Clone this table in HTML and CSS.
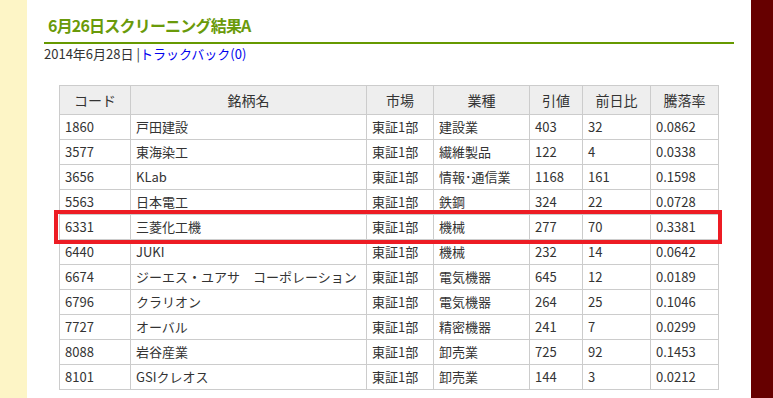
FILE: index.html
```html
<!DOCTYPE html>
<html lang="ja">
<head>
<meta charset="utf-8">
<title>6月26日スクリーニング結果A</title>
<link rel="stylesheet" href="styles.css">
</head>
<body>
<div class="page">
  <div class="side-left"></div>
  <main class="main">
    <h2 class="entry-title">6月26日スクリーニング結果A</h2>
    <div class="entry-meta">2014年6月28日 |<a href="#">トラックバック(0)</a></div>
    <div class="table-wrap">
      <table class="result">
        <colgroup>
          <col class="c-code"><col class="c-name"><col class="c-mkt"><col class="c-ind"><col class="c-price"><col class="c-diff"><col class="c-rate">
        </colgroup>
        <thead>
          <tr><th>コード</th><th>銘柄名</th><th>市場</th><th>業種</th><th>引値</th><th>前日比</th><th>騰落率</th></tr>
        </thead>
        <tbody>
          <tr><td>1860</td><td>戸田建設</td><td>東証1部</td><td>建設業</td><td>403</td><td>32</td><td>0.0862</td></tr>
          <tr><td>3577</td><td>東海染工</td><td>東証1部</td><td>繊維製品</td><td>122</td><td>4</td><td>0.0338</td></tr>
          <tr><td>3656</td><td>KLab</td><td>東証1部</td><td>情報･通信業</td><td>1168</td><td>161</td><td>0.1598</td></tr>
          <tr><td>5563</td><td>日本電工</td><td>東証1部</td><td>鉄鋼</td><td>324</td><td>22</td><td>0.0728</td></tr>
          <tr><td>6331</td><td>三菱化工機</td><td>東証1部</td><td>機械</td><td>277</td><td>70</td><td>0.3381</td></tr>
          <tr><td>6440</td><td>JUKI</td><td>東証1部</td><td>機械</td><td>232</td><td>14</td><td>0.0642</td></tr>
          <tr><td>6674</td><td>ジーエス・ユアサ　コーポレーション</td><td>東証1部</td><td>電気機器</td><td>645</td><td>12</td><td>0.0189</td></tr>
          <tr><td>6796</td><td>クラリオン</td><td>東証1部</td><td>電気機器</td><td>264</td><td>25</td><td>0.1046</td></tr>
          <tr><td>7727</td><td>オーバル</td><td>東証1部</td><td>精密機器</td><td>241</td><td>7</td><td>0.0299</td></tr>
          <tr><td>8088</td><td>岩谷産業</td><td>東証1部</td><td>卸売業</td><td>725</td><td>92</td><td>0.1453</td></tr>
          <tr><td>8101</td><td>GSIクレオス</td><td>東証1部</td><td>卸売業</td><td>144</td><td>3</td><td>0.0212</td></tr>
        </tbody>
      </table>
      <div class="highlight"></div>
    </div>
  </main>
  <div class="side-right"></div>
</div>
</body>
</html>
```

FILE: styles.css
```css
html, body {
  margin: 0;
  padding: 0;
  background: #ffffff;
}
body {
  font-family: "Noto Sans CJK JP", "Liberation Sans", sans-serif;
  color: #333333;
}
.page {
  display: flex;
  min-height: 398px;
}
.side-left {
  width: 27px;
  flex: none;
  background: #fdf5c6;
}
.side-right {
  width: 22px;
  flex: none;
  background: #660000;
}
.main {
  flex: 1;
  padding: 0 17px;
  background: #ffffff;
}
.entry-title {
  margin: 0;
  padding: 15px 0 7px 4px;
  font-size: 16px;
  line-height: 20px;
  font-weight: bold;
  color: #6a9a0a;
  border-bottom: 2px solid #669900;
  letter-spacing: -0.8px;
}
.entry-meta {
  margin-top: 1px;
  font-size: 13px;
  line-height: 18px;
  color: #333333;
}
.entry-meta a {
  color: #0000ee;
  text-decoration: none;
}
.table-wrap {
  position: relative;
  margin: 22px 0 0 15px;
  width: 660px;
}
.result {
  border-collapse: collapse;
  table-layout: fixed;
  width: 660px;
  font-size: 13px;
  color: #333333;
}
.c-code { width: 71px; }
.c-name { width: 236px; }
.c-mkt { width: 67px; }
.c-ind { width: 96px; }
.c-price { width: 53px; }
.c-diff { width: 68px; }
.c-rate { width: 68px; }
.result th, .result td {
  border: 1px solid #cccccc;
  white-space: nowrap;
  overflow: hidden;
}
.result th {
  background: #eeeeee;
  font-weight: normal;
  font-size: 14px;
  height: 28px;
  padding: 0;
  text-align: center;
}
.result td {
  height: 24px;
  padding: 0 0 0 5px;
  line-height: 24px;
  text-align: left;
}
.highlight {
  position: absolute;
  left: -5px;
  top: 125px;
  width: 668px;
  height: 34px;
  box-sizing: border-box;
  border: 4px solid #ed1c24;
}
```
